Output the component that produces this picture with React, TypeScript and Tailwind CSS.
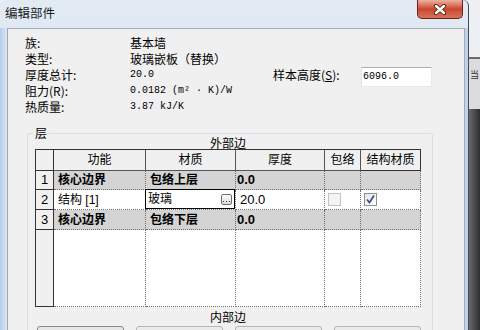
const rows = [
  { n: "1", fn: "核心边界", mat: "包络上层", th: "0.0", edit: false },
  { n: "2", fn: "结构 [1]", mat: "玻璃", th: "20.0", edit: true },
  { n: "3", fn: "核心边界", mat: "包络下层", th: "0.0", edit: false },
];

const CloseButton = () => (
  <div className="mr-[5px] ml-auto flex h-[19px] w-[46px] items-center justify-center rounded-b-[5px] border border-t-0 border-[#6a2417] bg-gradient-to-b from-[#eab1a3] via-[#c9452b] to-[#d8745a]">
    <svg width="14" height="11" viewBox="0 0 14 11">
      <path d="M3 2 L11 9 M11 2 L3 9" stroke="#4a2018" strokeWidth="4.2" strokeLinecap="round" />
      <path d="M3 2 L11 9 M11 2 L3 9" stroke="#ffffff" strokeWidth="2.4" strokeLinecap="round" />
    </svg>
  </div>
);

// mono: numbers are drawn in a smaller fixed-width face, chinese values stay at 12px
const InfoRow = ({ label, value, mono }: { label: string; value: string; mono?: boolean }) => (
  <div className="flex h-[16px] items-start leading-[16px]">
    <span className="w-[105px]">{label}</span>
    <span className={mono ? "font-['Liberation_Mono','Noto_Sans_CJK_SC',monospace] text-[10px]" : ""}>{value}</span>
  </div>
);

const Check = ({ on }: { on: boolean }) =>
  on ? (
    <div className="flex h-[13px] w-[13px] items-center justify-center border border-[#8e8f8f] bg-gradient-to-br from-[#e6e6e6] to-[#ffffff]">
      <svg width="11" height="11" viewBox="0 0 11 11">
        <path d="M2 5.5 L4.5 8.5 L9 1.5" fill="none" stroke="#3c4a9c" strokeWidth="1.7" />
      </svg>
    </div>
  ) : (
    <div className="h-[13px] w-[13px] border border-[#c2c2c2] bg-[#f4f4f4]" />
  );

const Table = () => (
  <div className="ml-[2px] grid w-[386px] grid-cols-[18px_92px_90px_89px_36px_60px] grid-rows-[21px_19px_20px_20px_77px] border-t border-l border-[#333] font-['Liberation_Sans','Noto_Sans_CJK_SC',sans-serif] text-[12px]">
    <div className="border-r border-b border-[#333] bg-[#f0f0f0]" />
    <div className="flex items-center justify-center border-r border-b border-[#555] bg-[#f0f0f0]">功能</div>
    <div className="flex items-center justify-center border-r border-b border-[#555] bg-[#f0f0f0]">材质</div>
    <div className="flex items-center justify-center border-r border-b border-[#555] bg-[#f0f0f0]">厚度</div>
    <div className="flex items-center justify-center border-r border-b border-[#555] bg-[#f0f0f0]">包络</div>
    <div className="flex items-center justify-center border-r border-b border-[#333] bg-[#f0f0f0]">结构材质</div>

    {rows.map((r) => (
      <div key={r.n} className="contents">
        <div className="flex items-center justify-center border-r border-b border-[#333] bg-[#f0f0f0] text-[13px]">{r.n}</div>
        <div
          className={
            r.edit
              ? "flex items-center border-r border-b border-dotted border-[#6e6e6e] bg-white pl-[4px]"
              : "flex items-center border-r border-b border-dotted border-[#6e6e6e] bg-[#d4d4d4] pl-[4px] font-bold"
          }
        >
          {r.fn}
        </div>
        {r.edit ? (
          <div className="border-r border-b border-dotted border-[#6e6e6e] bg-white">
            <div className="-mt-px -ml-px flex h-[20px] w-[90px] items-center border border-black pl-[2px]">
              <span>{r.mat}</span>
              <div className="mr-[2px] ml-auto flex h-[11px] w-[11px] items-end justify-center rounded-[2px] border border-[#707070] bg-gradient-to-b from-[#ffffff] to-[#d9d9d9] pb-[1px]">
                <svg width="7" height="2" viewBox="0 0 7 2">
                  <rect x="0" y="0" width="1" height="1" fill="#333" />
                  <rect x="3" y="0" width="1" height="1" fill="#333" />
                  <rect x="6" y="0" width="1" height="1" fill="#333" />
                </svg>
              </div>
            </div>
          </div>
        ) : (
          <div className="flex items-center border-r border-b border-dotted border-[#6e6e6e] bg-[#d4d4d4] pl-[4px] font-bold">
            {r.mat}
          </div>
        )}
        <div
          className={
            r.edit
              ? "flex items-center border-r border-b border-dotted border-[#6e6e6e] bg-white pl-[4px] text-[13px]"
              : "flex items-center border-r border-b border-dotted border-[#6e6e6e] bg-[#d4d4d4] pl-[1px] text-[13px] font-bold"
          }
        >
          {r.th}
        </div>
        <div
          className={
            r.edit
              ? "flex items-center border-r border-b border-dotted border-[#6e6e6e] bg-white pl-[3px]"
              : "border-r border-b border-dotted border-[#6e6e6e] bg-[#d4d4d4]"
          }
        >
          {r.edit && <Check on={false} />}
        </div>
        <div
          className={
            r.edit
              ? "flex items-center border-r border-b border-dotted border-[#6e6e6e] bg-white pl-[3px]"
              : "border-r border-b border-dotted border-[#6e6e6e] bg-[#d4d4d4]"
          }
        >
          {r.edit && <Check on={true} />}
        </div>
      </div>
    ))}

    <div className="border-r border-b border-[#333] bg-[#f0f0f0]" />
    <div className="border-r border-b border-dotted border-[#6e6e6e] bg-white" />
    <div className="border-r border-b border-dotted border-[#6e6e6e] bg-white" />
    <div className="border-r border-b border-dotted border-[#6e6e6e] bg-white" />
    <div className="border-r border-b border-dotted border-[#6e6e6e] bg-white" />
    <div className="border-r border-b border-dotted border-[#6e6e6e] bg-white" />
  </div>
);

const Window = () => (
  <div className="flex h-full w-[469px] shrink-0 flex-col rounded-t-[6px] border-r border-[#3f4a55] bg-gradient-to-b from-[#e2eaf4] to-[#cfdcea]">
    <div className="flex h-[28px] shrink-0 items-start">
      <span className="pt-[5px] pl-[5px] text-[12.5px] leading-[16px] text-[#1b1b1b]">编辑部件</span>
      <CloseButton />
    </div>
    <div className="flex min-h-0 flex-1">
      <div className="w-[7px] bg-gradient-to-r from-[#b6cde7] to-[#dde7f1]" />
      <div className="min-h-0 flex-1 overflow-hidden border border-b-0 border-[#9fabb8] bg-[#f0f0f0]">
        <div className="pt-[6px] pl-[17px]">
          <InfoRow label="族:" value="基本墙" />
          <InfoRow label="类型:" value="玻璃嵌板（替换）" />
          <div className="flex h-[16px] items-start leading-[16px]">
            <span className="w-[105px]">厚度总计:</span>
            <span className="w-[143px] font-['Liberation_Mono',monospace] text-[10px]">20.0</span>
            <span className="w-[88px]">
              样本高度(<span className="underline">S</span>):
            </span>
            <div className="flex h-[20px] w-[71px] items-center border border-t-[#abadb3] border-r-[#e3e9ef] border-b-[#e3e9ef] border-l-[#e2e3ea] bg-white pl-[1px] font-['Liberation_Mono',monospace] text-[10px]">
              6096.0
            </div>
          </div>
          <InfoRow label="阻力(R):" value="0.0182 (m² · K)/W" mono />
          <InfoRow label="热质量:" value="3.87 kJ/K" mono />
        </div>

        <fieldset className="mt-[10px] ml-[19px] w-[406px] rounded-[3px] border border-[#d5dfe5] pb-[10px] pl-[5px]">
          <legend className="px-[2px] leading-[16px]">层</legend>
          <div className="-mt-[5px] ml-[2px] h-[13px] w-[386px] text-center leading-[13px]">外部边</div>
          <Table />
          <div className="mt-[2px] ml-[2px] h-[16px] w-[386px] text-center leading-[16px]">内部边</div>
          <div className="mt-[1px] ml-[4px] flex gap-[12px]">
            <div className="h-[23px] w-[87px] rounded-[3px] border border-[#8a8a8a] bg-gradient-to-b from-[#e8e8e8] to-[#d6d6d6]" />
            <div className="h-[23px] w-[87px] rounded-[3px] border border-[#b5b5b5] bg-gradient-to-b from-[#ececec] to-[#dedede]" />
            <div className="h-[23px] w-[87px] rounded-[3px] border border-[#b5b5b5] bg-gradient-to-b from-[#ececec] to-[#dedede]" />
            <div className="h-[23px] w-[87px] rounded-[3px] border border-[#b5b5b5] bg-gradient-to-b from-[#ececec] to-[#dedede]" />
          </div>
        </fieldset>
      </div>
      <div className="w-[3px] bg-[#bfd4ec]" />
    </div>
  </div>
);

const BackgroundStrip = () => (
  <div className="flex min-w-0 flex-1 flex-col">
    <div className="h-[57px] bg-[#eef0f3]" />
    <div className="h-[2px] bg-[#6b6b6b]" />
    <div className="h-[50px] overflow-hidden bg-[#dcdcdc] pt-[10px] pl-[1px] text-[9px] leading-[12px] text-[#333]">当</div>
    <div className="flex-1 bg-gradient-to-r from-[#6a6a6a] to-[#2e2e2e]" />
  </div>
);

export default function App() {
  return (
    <div className="flex h-[330px] w-[480px] overflow-hidden bg-[#eceef0] font-['Noto_Sans_CJK_SC',sans-serif] text-[12px] text-black">
      <Window />
      <BackgroundStrip />
    </div>
  );
}
